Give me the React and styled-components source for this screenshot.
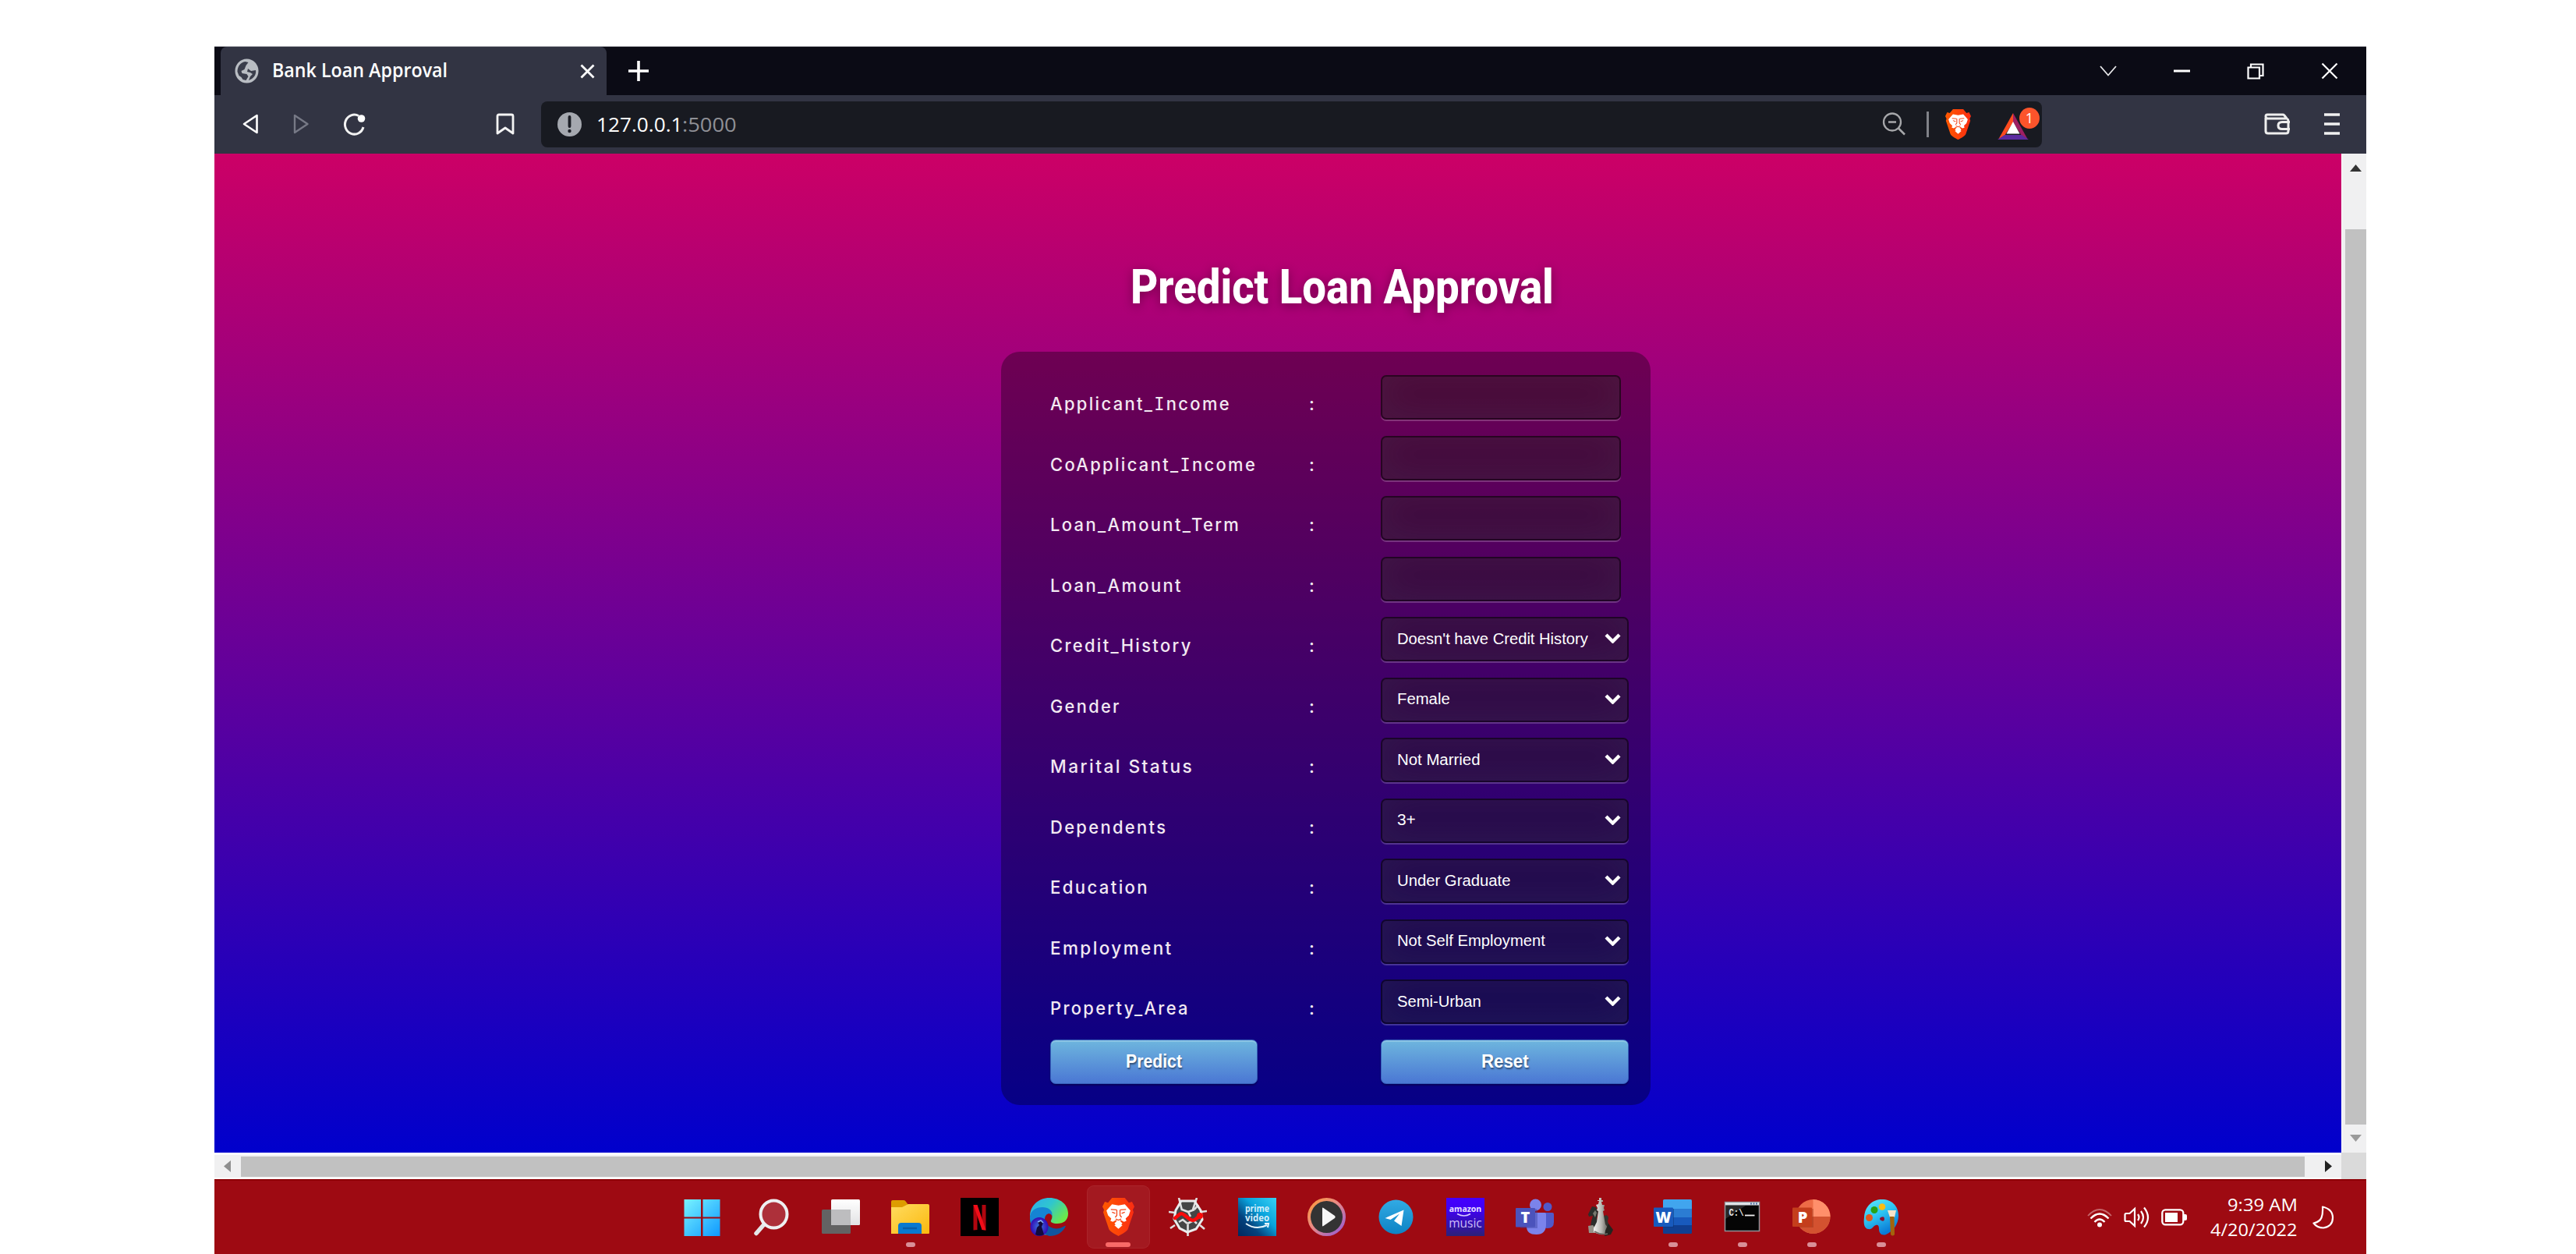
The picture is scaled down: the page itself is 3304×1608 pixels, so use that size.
import React, { useLayoutEffect, useRef, useState } from "react";
import styled, { createGlobalStyle } from "styled-components";

const Global = createGlobalStyle`
  * { box-sizing: border-box; }
  body { margin: 0; background: #ffffff; }
  svg { display: block; flex: none; }
`;

const UI = `"Open Sans", "Noto Sans", sans-serif`;
const ARIAL = `"Liberation Sans", Arial, sans-serif`;

/* ---------- text that fills a given width ---------- */
const FitBox = styled.span`
  display: block;
  flex: none;
  width: ${(p) => p.$w}px;
  white-space: nowrap;
`;
const FitInner = styled.span`
  display: inline-block;
  transform-origin: 0 50%;
`;
function Fit({ w, children }) {
  const ref = useRef(null);
  const [scale, setScale] = useState(1);
  useLayoutEffect(() => {
    const measure = () => {
      const n = ref.current?.offsetWidth;
      if (n) setScale(w / n);
    };
    measure();
    document.fonts?.ready.then(measure);
  }, [w]);
  return (
    <FitBox $w={w}>
      <FitInner ref={ref} style={{ transform: `scaleX(${scale})` }}>{children}</FitInner>
    </FitBox>
  );
}

/* ---------- browser frame ---------- */
const Screen = styled.div`
  width: 3304px;
  height: 1608px;
  padding: 59px 268px 0 275px;
  overflow: hidden;
`;
const Frame = styled.div`
  width: 2760px;
  display: flex;
  flex-direction: column;
  border-top: 1px solid #b5b5ba;
`;
const TabStrip = styled.div`
  height: 62px;
  display: flex;
  background: #0b0b15;
  padding-left: 8px;
`;
const Tab = styled.div`
  width: 495px;
  display: flex;
  align-items: center;
  padding: 0 15px 0 18px;
  background: #323443;
  border-radius: 8px 8px 0 0;
`;
const TabTitle = styled.div`
  margin-left: 17px;
  flex: 1;
  font: 600 24.5px/34px ${UI};
  color: #fff;
  padding-bottom: 2px;
`;
const NewTab = styled.div`
  margin-left: 28px;
  padding-top: 18px;
`;
const WindowButtons = styled.div`
  margin-left: auto;
  display: flex;
  align-items: center;
  gap: 73px;
  padding-right: 36px;
`;
const Toolbar = styled.div`
  height: 75px;
  display: flex;
  align-items: center;
  background: #323443;
  padding: 0 34px 1px 35px;
`;
const NavIcons = styled.div`
  display: flex;
  align-items: center;
  gap: 43px;
  width: 326px;
`;
const Address = styled.div`
  margin-left: 58px;
  width: 1925px;
  height: 59px;
  display: flex;
  align-items: center;
  background: #181a21;
  border-radius: 8px;
  padding: 0 3px 0 21px;
`;
const Url = styled.div`
  display: flex;
  margin-left: 19px;
  padding-bottom: 1px;
  flex: 1;
  font: 400 25px/34px ${UI};
  color: #fff;
`;
const Port = styled.span`
  color: #8f9096;
`;
const Divider = styled.div`
  width: 3px;
  height: 33px;
  margin: 0 21px 0 27px;
  background: #808288;
`;
const Rewards = styled.div`
  position: relative;
  width: 54px;
  height: 42px;
  margin-left: 34px;
`;
const Badge = styled.div`
  position: absolute;
  right: 0;
  top: 0;
  width: 26px;
  height: 27px;
  border-radius: 50%;
  background: #fb542b;
  color: #fff;
  font: 400 18px/27px ${UI};
  text-align: center;
`;
const ToolEnd = styled.div`
  margin-left: auto;
  display: flex;
  align-items: center;
  gap: 43px;
`;

/* ---------- page ---------- */
const Viewport = styled.div`
  display: grid;
  grid-template-columns: 2728px 32px;
  grid-template-rows: 1281px 34px;
`;
const Page = styled.div`
  background: linear-gradient(#cc0066, #0000cc);
  padding: 128px 0 0 1009px;
`;
const Title = styled.h1`
  margin: 0 0 46px 166px;
  height: 80px;
  padding-top: 3px;
  font: 800 62px/80px Roboto, "Noto Sans", sans-serif;
  color: #fff;
  text-shadow: 0 3px 14px rgba(0, 0, 0, 0.35);
`;
const Panel = styled.form`
  width: 833px;
  height: 966px;
  padding: 30px 28px 0 63px;
  border-radius: 24px;
  background: rgba(0, 0, 0, 0.325);
`;
const Row = styled.div`
  display: grid;
  grid-template-columns: 332px 92px 318px;
  height: 77.5px;
`;
const Label = styled.label`
  padding-top: 21px;
  font: 500 22.5px/32px Inter, "Noto Sans", sans-serif;
  letter-spacing: 2.4px;
  color: #f3e9f2;
`;
const SlabI = styled.span`
  font-family: "DejaVu Sans Mono", monospace;
  line-height: 1;
`;
const Field = styled.div`
  width: ${(p) => (p.$input ? 308 : 318)}px;
  height: 57px;
  display: flex;
  align-items: center;
  justify-content: space-between;
  padding: 0 8px 2px 19px;
  border: 2px solid rgba(0, 0, 0, 0.42);
  border-radius: 7px;
  background: rgba(30, 24, 24, 0.42);
  box-shadow: 0 2px 0 rgba(255, 255, 255, 0.2), inset 0 -5px 45px rgba(100, 100, 100, 0.16);
  font: 400 20px/28px ${ARIAL};
  color: #fff;
`;
const Actions = styled.div`
  display: flex;
  justify-content: space-between;
  margin-top: -1px;
`;
const Button = styled.button`
  width: ${(p) => p.$w}px;
  height: 57px;
  display: flex;
  align-items: center;
  justify-content: center;
  border: 1px solid #3762bc;
  border-radius: 7px;
  padding: 0;
  background: linear-gradient(#6eb6de, #4a77d4);
  box-shadow: inset 0 2px 0 rgba(255, 255, 255, 0.2), 0 2px 2px rgba(0, 0, 0, 0.3);
  text-shadow: 1px 2px 2px rgba(0, 0, 0, 0.45);
  font: 700 23px/30px ${ARIAL};
  color: #fff;
`;
const VScroll = styled.div`
  display: flex;
  flex-direction: column;
  align-items: center;
  background: #f0f0f1;
  padding: 14px 0 14px 4px;
  border-left: 1px solid #fff;
`;
const VThumb = styled.div`
  width: 27px;
  height: 1149px;
  margin: 74px 0 13px;
  background: #c1c1c1;
`;
const HScroll = styled.div`
  display: flex;
  align-items: center;
  background: #f0f0f1;
  border-top: 3px solid #fcfcff;
  border-bottom: 2px solid #fff;
  padding-left: 12px;
`;
const HThumb = styled.div`
  width: 2647px;
  height: 26px;
  margin: 0 26px 0 13px;
  background: #c1c1c1;
`;
const Corner = styled.div`
  background: #dadada;
`;

/* ---------- taskbar ---------- */
const Taskbar = styled.div`
  height: 96px;
  display: flex;
  background: #9e0a12;
  border-top: 2px solid #8e0006;
  padding-left: 581.5px;
`;
const Slot = styled.div`
  width: 88.93px;
  display: flex;
  justify-content: center;
  padding-top: 6px;
`;
const Tile = styled.div`
  flex: none;
  width: 81px;
  height: 81px;
  display: flex;
  flex-direction: column;
  align-items: center;
  padding-top: 16px;
  gap: 8px;
  border-radius: 9px;
  ${(p) => p.$active && "background:#a31920; box-shadow: inset 0 0 0 1px #aa242a;"}
`;
const Running = styled.div`
  width: ${(p) => (p.$active ? 32 : 12)}px;
  height: 6px;
  border-radius: 3px;
  background: ${(p) => (p.$active ? "#f96a68" : "#d98f98")};
`;
const Tray = styled.div`
  margin-left: auto;
  display: flex;
  align-items: center;
  padding: 0 41px 0 0;
`;
const Clock = styled.div`
  width: 112px;
  margin: 0 19px 0 29px;
  display: flex;
  flex-direction: column;
  align-items: flex-end;
  font: 400 22.5px/32px ${UI};
  color: #fff;
`;

/* ---------- small icons ---------- */
const Svg = ({ w, h, box, children, ...rest }) => (
  <svg width={w} height={h} viewBox={box || `0 0 ${w} ${h}`} fill="none" {...rest}>{children}</svg>
);

const Globe = () => (
  <Svg w={31} h={32}>
    <ellipse cx="15.5" cy="16" rx="15" ry="15.5" fill="#b9bdc3" />
    <path d="M3.500 17c0-7 4-12 10-13l4 1-3 4-2 5-4 2 1 3 6 1 2 3-3 5-4-1-2-3-3-2z" fill="#3a3d4b" />
    <path d="M17 13l4 3 6-1c1 6-3 11-9 13l2-5 3-3-3-2-4-1z" fill="#3a3d4b" />
  </Svg>
);
const Cross = ({ w, h, sw }) => (
  <Svg w={w} h={h}>
    <path d={`M1.5 1.5L${w - 1.5} ${h - 1.5}M${w - 1.5} 1.5L1.5 ${h - 1.5}`} stroke="#fff" strokeWidth={sw} />
  </Svg>
);
const Arrow = ({ dir, fill, w, h }) => {
  const pts = {
    up: `${w / 2},0 ${w},${h} 0,${h}`,
    down: `0,0 ${w},0 ${w / 2},${h}`,
    left: `${w},0 ${w},${h} 0,${h / 2}`,
    right: `0,0 ${w},${h / 2} 0,${h}`,
  }[dir];
  return <Svg w={w} h={h}><polygon points={pts} fill={fill} /></Svg>;
};
const Brave = ({ w, h }) => (
  <Svg w={w} h={h} box="0 0 40 48" preserveAspectRatio="none">
    <defs>
      <linearGradient id="brv" x1="0" y1="0" x2="1" y2="0">
        <stop offset="0" stopColor="#ff5a00" /><stop offset="1" stopColor="#fb2c12" />
      </linearGradient>
    </defs>
    <path d="M12 0h16l5 6 4-1 3 6-2 4 1 3-7 21c-1 3-8 7-12 9-4-2-11-6-12-9L1 18l1-3-2-4 3-6 4 1z" fill="url(#brv)" />
    <path d="M12 8l8 1.500L28 8l7 8-2 6-4 4 1 3-3 1-4-2-1 1 3 3-5 5-5-5 3-3-1-1-4 2-3-1 1-3-4-4-2-6z" fill="#fff" />
    <path d="M10.500 14.500l7 .500M29.500 14.500l-7 .500M12 18l4 1.500M28 18l-4 1.500M18 15v7l-2 2.500M22 15v7l2 2.500M16.500 26.500L20 28l3.500-1.500" stroke="#f4481c" strokeWidth="1.300" />
    <path d="M20 31l5 3.500-5 4.500-5-4.500z" fill="#fff" />
  </Svg>
);

/* ---------- taskbar icons, 49 x 49 ---------- */
const T = (props) => <Svg w={49} h={49} {...props} />;

const Start = () => (
  <T>
    <defs><linearGradient id="win" x1="0" y1="0" x2="49" y2="49" gradientUnits="userSpaceOnUse">
      <stop offset="0" stopColor="#7cf6ff" /><stop offset="1" stopColor="#0d97ff" /></linearGradient></defs>
    <path d="M1.500 2h21.500v22.500h-21.500zM25.500 2h22v22.500h-22zM1.500 26.500h21.500V49h-21.500zM25.500 26.500h22V49h-22z" fill="url(#win)" />
  </T>
);
const Search = () => (
  <T>
    <path d="M15 34L5 45.500" stroke="#e3e6e8" strokeWidth="5.500" strokeLinecap="round" />
    <ellipse cx="27.500" cy="21" rx="17" ry="17.500" fill="#ad303a" stroke="#eef0f2" strokeWidth="4" />
  </T>
);
const TaskView = () => (
  <T>
    <defs><linearGradient id="tv" x1="0" y1="0" x2="0" y2="1">
      <stop offset="0" stopColor="#fff" /><stop offset="1" stopColor="#e2e2e4" /></linearGradient></defs>
    <rect x="12" y="2" width="37" height="33" rx="1.500" fill="url(#tv)" />
    <rect x="0" y="15" width="37" height="31" rx="1.500" fill="#636363" />
    <path d="M12 15h25v20H12z" fill="#bdbdbf" />
  </T>
);
const Explorer = () => (
  <T>
    <defs><linearGradient id="fld" x1="0" y1="0" x2="1" y2="1">
      <stop offset="0" stopColor="#ffdc60" /><stop offset="1" stopColor="#fbb90e" /></linearGradient></defs>
    <path d="M0 5q0-2 2-2h14q2 0 3 2l3 4v8H0z" fill="#dd9c00" />
    <path d="M0 12h14l8-4h25q2 0 2 2v35q0 1-1 1H0z" fill="url(#fld)" />
    <path d="M9 46V36q0-4 4-4h22q4 0 4 4v10z" fill="#0a79cf" />
    <path d="M15 39h18" stroke="#0a5ea8" strokeWidth="2.500" />
  </T>
);
const Netflix = () => (
  <T>
    <path d="M0 0h49v49H0z" fill="#000" />
    <path d="M16.500 9h5v32l-5 .500zM27.500 9h5v32.500l-5-.500z" fill="#b1060f" />
    <path d="M16.500 9h5l11 32.500-5-.500z" fill="#f20d18" />
  </T>
);
const Edge = () => (
  <T>
    <defs>
      <linearGradient id="eg1" x1="0" y1="0" x2="1" y2=".6">
        <stop offset="0" stopColor="#2fa9ee" /><stop offset=".5" stopColor="#2fc6cf" /><stop offset="1" stopColor="#6be84c" /></linearGradient>
      <radialGradient id="eg2"><stop offset="0" stopColor="#3a7be0" /><stop offset="1" stopColor="#3409b4" /></radialGradient>
    </defs>
    <path d="M0 24C0 10 11 0 25 0s24 9 24 20c0 9-6 13-14 13-6 0-9-2-8-4 4-6 0-14-10-14C8 15 2 20 0 24z" fill="url(#eg1)" />
    <path d="M0 24c1-8 8-12 16-12 9 0 14 6 12 11-1-4-8-4-9 4-1 9 4 16 14 18-18 8-34-4-33-21z" fill="#1584d3" />
    <path d="M19 27c1 9 10 14 19 12 4-1 5-3 8-3-4 9-12 13-21 13-8-2-12-12-6-22z" fill="#10559f" />
    <ellipse cx="12" cy="37" rx="11.500" ry="12" fill="url(#eg2)" />
    <path d="M7 47l2-9 3-3-2-4 4-3 3 4-2 5 3 10q-6 3-11 0z" fill="#120a3c" />
    <path d="M10 31l4-2 3 3" stroke="#88b6ff" strokeWidth="1.500" />
  </T>
);
const BraveTask = () => <T><svg x="4" y="0" width="41" height="49" viewBox="0 0 41 49"><Brave w={41} h={49} /></svg></T>;
const Web = () => (
  <T>
    <path d="M16 5h17l9 11 2 13-9 12-11 4-11-5-8-12 2-13z" fill="#454545" />
    <path d="M17 16L13 0M31 15l5-15M8 19l-8-1M41 18l8-1M8 35l-6 4M40 35l6 5M24.500 34v15M17 15l8 3 8-3M33 15l5-6M25 18l3 6M13 31l5-3 6 5M24 33l8-4 4 4" stroke="#e0e0e0" strokeWidth="2.600" />
    <path d="M16 4h17l8 12 2 12-8 12-11 4-10-5-7-12 2-11z" stroke="#ececec" strokeWidth="3" />
    <path d="M8 26l6-5q3-2 6 1l8 6q4 2 7-1l6-5" stroke="#fa0a0a" strokeWidth="4.500" strokeLinecap="round" />
    <circle cx="40" cy="23" r="4" fill="#fa0a0a" />
  </T>
);
const Prime = () => (
  <T>
    <defs><linearGradient id="prm" x1="0" y1="1" x2="1" y2="0">
      <stop offset="0" stopColor="#00285e" /><stop offset=".3" stopColor="#04427d" /><stop offset=".6" stopColor="#09a3dd" /><stop offset="1" stopColor="#38d2f4" /></linearGradient></defs>
    <path d="M0 0h49v49H0z" fill="url(#prm)" />
    <text x="9" y="18" textLength="31" lengthAdjust="spacingAndGlyphs" fontFamily="Open Sans" fontWeight="700" fontSize="12" fill="#d5eefa">prime</text>
    <text x="9" y="30" textLength="31" lengthAdjust="spacingAndGlyphs" fontFamily="Open Sans" fontWeight="700" fontSize="12" fill="#d5eefa">video</text>
    <path d="M10 33q13 9 27 2M34 33l5 0-1 5" stroke="#e6f5fc" strokeWidth="2" />
  </T>
);
const Media = () => (
  <T>
    <defs>
      <linearGradient id="md" x1="0" y1="0" x2="1" y2="1"><stop offset="0" stopColor="#ff9a30" /><stop offset=".45" stopColor="#e98b86" /><stop offset="1" stopColor="#8a55dd" /></linearGradient>
    </defs>
    <circle cx="24.500" cy="24.500" r="24.500" fill="url(#md)" />
    <circle cx="24.500" cy="24.500" r="20.500" fill="#333" />
    <path d="M19 13.500q0-1.500 1.500-.500L35 23q1.500 1.500 0 3L20.500 36q-1.500 1-1.500-.500z" fill="#f6f6f6" />
  </T>
);
const Telegram = () => (
  <T>
    <defs><linearGradient id="tg" x1="0" y1="0" x2="0" y2="1"><stop offset="0" stopColor="#31aae4" /><stop offset="1" stopColor="#0e83c4" /></linearGradient></defs>
    <circle cx="24.500" cy="24.500" r="22" fill="url(#tg)" />
    <path d="M10.500 26L34.500 15.500 31.500 36 22 29.500l7-9-11.500 7.500z" fill="#fff" />
  </T>
);
const AmazonMusic = () => (
  <T>
    <defs><linearGradient id="am" x1="0" y1="0" x2="0" y2="1"><stop offset="0" stopColor="#4400ff" /><stop offset=".3" stopColor="#4000f4" /><stop offset="1" stopColor="#2b2078" /></linearGradient></defs>
    <path d="M0 0h49v49H0z" fill="url(#am)" />
    <text x="24.500" y="18" textAnchor="middle" fontFamily="Open Sans" fontWeight="700" fontSize="10.500" fill="#e8e0ff">amazon</text>
    <path d="M14 20.500q9 5 17 0" stroke="#d8ccff" strokeWidth="1.500" />
    <text x="24.500" y="38" textAnchor="middle" fontFamily="Open Sans" fontWeight="400" fontSize="15.500" fill="#cbbcf6">music</text>
  </T>
);
const Teams = () => (
  <T>
    <circle cx="41" cy="11.500" r="5.500" fill="#5059c9" />
    <path d="M36 19h11q2 0 2 2v10q0 8-8 8-6 0-7-5z" fill="#5059c9" />
    <circle cx="25.500" cy="9" r="7.500" fill="#7b83eb" />
    <path d="M16 19h21q2 0 2 2v13q0 13-12.500 13T14 37z" fill="#7b83eb" />
    <path d="M2 14h24q2 0 2 2v23H6z" fill="#3a3f9c" opacity=".4" />
    <rect x="0" y="13" width="25" height="24.500" rx="1" fill="#4b53bc" />
    <text x="12.500" y="32" textAnchor="middle" fontFamily="Open Sans" fontWeight="800" fontSize="20" fill="#fff">T</text>
  </T>
);
const Chess = () => (
  <T>
    <defs><linearGradient id="ch" x1="0" y1="0" x2="1" y2="0"><stop offset="0" stopColor="#f2f2f2" /><stop offset=".5" stopColor="#b8b8b2" /><stop offset="1" stopColor="#4c4b46" /></linearGradient></defs>
    <path d="M10 11l5 1 3 6-2 8 3 10-2 6H7l2-12 2-7-5 1-1-3z" fill="#2b2e2b" />
    <path d="M11 20l3-4 2 3-2 6z" fill="#77786f" />
    <path d="M24 26q0-3 4-4 3 1 3 4l-1 4 4 12-9 3z" fill="#35352f" />
    <path d="M5 36l6-1 6 7-4 3H6z" fill="#96938a" />
    <path d="M19 0h3v3h2v2h-2l1 4h3l-1 4 1 3-2 1 3 17 5 6v4q-8 6-20 0v-5l4-8 2-14-2-1 1-3-2-4 3-1 1-4h-2V3h2z" fill="url(#ch)" />
    <path d="M27 42l4-9 6 8-3 6-8 2z" fill="#24241f" />
    <path d="M13 43q8 5 17 3" stroke="#6f6e68" strokeWidth="1.500" />
  </T>
);
const Word = () => (
  <T>
    <path d="M12 3.500q0-1.500 1.500-1.500h34Q49 2 49 3.500V14H12z" fill="#41a5ee" />
    <path d="M12 14h37v11H12z" fill="#2b7cd3" /><path d="M12 25h37v10H12z" fill="#185abd" />
    <path d="M12 35h37v9.500q0 1.500-1.500 1.500h-34Q12 46 12 44.500z" fill="#103f91" />
    <path d="M12 14h14v24H12z" fill="#0b3474" opacity=".5" />
    <rect x="0" y="12.500" width="25" height="24.500" rx="1" fill="#185abd" />
    <text x="12.500" y="32" textLength="20" lengthAdjust="spacingAndGlyphs" textAnchor="middle" fontFamily="Open Sans" fontWeight="800" fontSize="20" fill="#fff">W</text>
  </T>
);
const Cmd = () => (
  <T>
    <rect x="2.500" y="5.500" width="44" height="37" fill="#050505" stroke="#8f9298" strokeWidth="1.500" />
    <path d="M3 6h43v3.500H3z" fill="#dfe3e8" /><path d="M35 7.500h9" stroke="#4a68a0" strokeWidth="2" strokeDasharray="2 1.500" />
    <path d="M3 10h26L3 27z" fill="#fff" opacity=".14" />
    <text x="7.500" y="22.500" textLength="19" lengthAdjust="spacingAndGlyphs" fontFamily="Liberation Mono" fontWeight="700" fontSize="12" fill="#e8e8e8">C:\</text>
    <path d="M28 22.500h12.500" stroke="#f0f0f0" strokeWidth="1.800" />
  </T>
);
const PowerPoint = () => (
  <T>
    <circle cx="26.500" cy="24" r="22" fill="#ed6c47" />
    <path d="M26.500 24V2a22 22 0 0 1 22 22z" fill="#ff8f6b" />
    <path d="M4.500 24h44a22 22 0 0 1-44 0z" fill="#d35230" />
    <path d="M6 14h21v24H8z" fill="#8c2a10" opacity=".35" />
    <rect x="0" y="12.500" width="25" height="24.500" rx="1" fill="#c43e1c" />
    <text x="13" y="32" textAnchor="middle" fontFamily="Open Sans" fontWeight="800" fontSize="20" fill="#fff">P</text>
  </T>
);
const Paint = () => (
  <T>
    <defs><linearGradient id="pt" x1="0" y1="0" x2=".5" y2="1"><stop offset="0" stopColor="#5feaff" /><stop offset=".5" stopColor="#2ec5f2" /><stop offset="1" stopColor="#0a7ad6" /></linearGradient></defs>
    <path d="M26 2c12 0 21 8 21 21 0 11-7 20-16 24-6 2-9-2-9-7 0-4-1-6-4-5-4 1-4 6-10 5-5-1-6-7-5-15C4 10 14 2 26 2z" fill="url(#pt)" />
    <path d="M26 24.500q3-1 3 2.500t-3 2.500-3-2.500q0-2 3-2.500z" fill="#8b1030" />
    <ellipse cx="26" cy="11.500" rx="4.300" ry="4.300" fill="#fdbd12" /><ellipse cx="16" cy="15.500" rx="4.500" ry="4.500" fill="#27a316" /><ellipse cx="9.500" cy="25.500" rx="4.500" ry="4.500" fill="#e0571e" />
    <path d="M33 16h11l-2 9h-6z" fill="#f7e4c8" /><path d="M36 24h5.500l.5 23q-2.500 3-5 0z" fill="#a4630c" />
  </T>
);

const apps = [
  { Icon: Start }, { Icon: Search }, { Icon: TaskView }, { Icon: Explorer, run: true },
  { Icon: Netflix }, { Icon: Edge }, { Icon: BraveTask, run: true, active: true }, { Icon: Web },
  { Icon: Prime }, { Icon: Media }, { Icon: Telegram }, { Icon: AmazonMusic }, { Icon: Teams },
  { Icon: Chess }, { Icon: Word, run: true }, { Icon: Cmd, run: true },
  { Icon: PowerPoint, run: true }, { Icon: Paint, run: true },
];

const rows = [
  { label: "Applicant_Income", w: 232 },
  { label: "CoApplicant_Income", w: 265 },
  { label: "Loan_Amount_Term", w: 244 },
  { label: "Loan_Amount", w: 170 },
  { label: "Credit_History", w: 183, value: "Doesn't have Credit History", vw: 245 },
  { label: "Gender", w: 91, value: "Female", vw: 68 },
  { label: "Marital Status", w: 184, value: "Not Married", vw: 106 },
  { label: "Dependents", w: 150, value: "3+", vw: 24 },
  { label: "Education", w: 127, value: "Under Graduate", vw: 145 },
  { label: "Employment", w: 158, value: "Not Self Employment", vw: 190 },
  { label: "Property_Area", w: 179, value: "Semi-Urban", vw: 108 },
];

/* capital I is drawn with serifs in the labels */
const labelText = (text) =>
  text.split(/(I)/).map((part, i) => (part === "I" ? <SlabI key={i}>I</SlabI> : part));

const Chevron = () => (
  <Svg w={21} h={13}><path d="M2 2l8.500 8.500L19 2" stroke="#fff" strokeWidth="4.300" /></Svg>
);

export default function App() {
  return (
    <Screen>
      <Global />
      <Frame>
        <TabStrip>
          <Tab>
            <Globe />
            <TabTitle><Fit w={225}>Bank Loan Approval</Fit></TabTitle>
            <Cross w={19} h={19} sw={2.8} />
          </Tab>
          <NewTab>
            <Svg w={26} h={26}><path d="M13 0v26M0 13h26" stroke="#fff" strokeWidth="3.600" /></Svg>
          </NewTab>
          <WindowButtons>
            <Svg w={22} h={14}><path d="M1 1l10 11.500L21 1" stroke="#e8e8ea" strokeWidth="1.800" /></Svg>
            <Svg w={21} h={4}><path d="M0 2h21" stroke="#fff" strokeWidth="3" /></Svg>
            <Svg w={22} h={21}>
              <path d="M1.500 5.500h14.500v14H1.500zM5 5V1.500h15.500V16H16.500" stroke="#fff" strokeWidth="2.200" />
            </Svg>
            <Cross w={22} h={22} sw={2.2} />
          </WindowButtons>
        </TabStrip>

        <Toolbar>
          <NavIcons>
            <Svg w={22} h={28}><path d="M19.500 3v22L3 14z" stroke="#fff" strokeWidth="2.600" strokeLinejoin="round" /></Svg>
            <Svg w={22} h={28}><path d="M3 3v22l16.500-11z" stroke="#777986" strokeWidth="2.400" strokeLinejoin="round" /></Svg>
            <Svg w={30} h={30}>
              <path d="M20 4.500A12 12.500 0 1 0 26 19" stroke="#f2f2f2" strokeWidth="3" />
              <circle cx="23.500" cy="8" r="4.800" fill="#fff" />
            </Svg>
          </NavIcons>
          <Svg w={24} h={29} style={{ marginRight: -24 }}>
            <path d="M2 4q0-2 2-2h16q2 0 2 2v22l-10-7-10 7z" stroke="#f4f4f4" strokeWidth="2.800" strokeLinejoin="round" />
          </Svg>
          <Address>
            <Svg w={31} h={31}>
              <circle cx="15.500" cy="15.500" r="15.500" fill="#a5a8af" />
              <path d="M15.500 6v12" stroke="#1c1e26" strokeWidth="3.800" strokeLinecap="round" /><circle cx="15.500" cy="24" r="2.200" fill="#1c1e26" />
            </Svg>
            <Url><Fit w={110}>127.0.0.1</Fit><Port><Fit w={70}>:5000</Fit></Port></Url>
            <Svg w={30} h={30}>
              <circle cx="13" cy="12.500" r="11" stroke="#a6a7aa" strokeWidth="2.300" />
              <path d="M21 20.500l8 8M8 12.500h10" stroke="#a6a7aa" strokeWidth="2.500" />
            </Svg>
            <Divider />
            <Brave w={33} h={39} />
            <Rewards>
              <Svg w={40} h={42}>
                <path d="M20 7L1 41l8-5 11-17z" fill="#ff4b1e" />
                <path d="M20 7l19 34-8-5-11-17z" fill="#9e1f63" />
                <path d="M0 41h40l-9-6H9z" fill="#5b2ba0" />
                <path d="M20 18l8.500 15.500h-17z" fill="#fff" />
              </Svg>
              <Badge>1</Badge>
            </Rewards>
          </Address>
          <ToolEnd>
            <Svg w={34} h={28}>
              <path d="M2 6v17q0 3 3 3h23q3 0 3-3V10q0-2-2-3l-3-4q-1-1-2-1H4Q2 2 2 4.500T5 7h23" stroke="#eeeeee" strokeWidth="3" />
              <path d="M33 11.500H23q-5 0-5 4.500t5 4.500h10" stroke="#eeeeee" strokeWidth="3" />
            </Svg>
            <Svg w={20} h={28}><path d="M0 2h20M0 14h20M0 26h20" stroke="#f1f1f1" strokeWidth="3.600" /></Svg>
          </ToolEnd>
        </Toolbar>

        <Viewport>
          <Page>
            <Title><Fit w={543}>Predict Loan Approval</Fit></Title>
            <Panel>
              {rows.map((r) => (
                <Row key={r.label}>
                  <Label><Fit w={r.w}>{labelText(r.label)}</Fit></Label>
                  <Label as="span">:</Label>
                  <Field $input={!r.value}>
                    {r.value && <><Fit w={r.vw}>{r.value}</Fit><Chevron /></>}
                  </Field>
                </Row>
              ))}
              <Actions>
                <Button type="button" $w={266}><Fit w={72}>Predict</Fit></Button>
                <Button type="button" $w={318}><Fit w={61}>Reset</Fit></Button>
              </Actions>
            </Panel>
          </Page>
          <VScroll>
            <Arrow dir="up" w={15} h={9} fill="#333" />
            <VThumb />
            <Arrow dir="down" w={15} h={9} fill="#9a9a9a" />
          </VScroll>
          <HScroll>
            <Arrow dir="left" w={9} h={15} fill="#8f8f8f" />
            <HThumb />
            <Arrow dir="right" w={9} h={15} fill="#222" />
          </HScroll>
          <Corner />
        </Viewport>

        <Taskbar>
          {apps.map(({ Icon, run, active }, i) => (
            <Slot key={i}>
              <Tile $active={active}>
                <Icon />
                {run && <Running $active={active} />}
              </Tile>
            </Slot>
          ))}
          <Tray>
            <Svg w={32} h={26}>
              <path d="M1 11Q16-5 31 11" stroke="#c4666b" strokeWidth="1.800" />
              <path d="M4.500 14.500q11.500-12 23 0M9.500 19q6.500-7 13 0" stroke="#fff" strokeWidth="2.400" />
              <circle cx="16" cy="22.500" r="3" fill="#fff" />
            </Svg>
            <Svg w={34} h={28} style={{ marginLeft: 15 }}>
              <path d="M1.500 10.500q0-1.500 1.500-1.500h4.500L14 3v22l-6.500-6H3q-1.500 0-1.500-1.500zM18 10q3 4 0 8M22 6q6 8 0 16M26 1.500q10 12.500 0 25" stroke="#fff" strokeWidth="2.200" />
            </Svg>
            <Svg w={34} h={22} style={{ marginLeft: 14 }}>
              <rect x="1.300" y="1.300" width="27" height="19" rx="4" stroke="#fff" strokeWidth="2.300" />
              <path d="M5 5h16v12H5z" fill="#fff" /><path d="M29 7h2q2 0 2 2v4q0 2-2 2h-2z" fill="#fff" />
            </Svg>
            <Clock><Fit w={90}>9:39 AM</Fit><Fit w={112}>4/20/2022</Fit></Clock>
            <Svg w={28} h={30}>
              <path d="M13 1.500q13 3 13 14T14 28.500q-8 0-12.500-6 8-2 10-7t1.500-14z" stroke="#fff" strokeWidth="2.200" strokeLinejoin="round" />
            </Svg>
          </Tray>
        </Taskbar>
      </Frame>
    </Screen>
  );
}
